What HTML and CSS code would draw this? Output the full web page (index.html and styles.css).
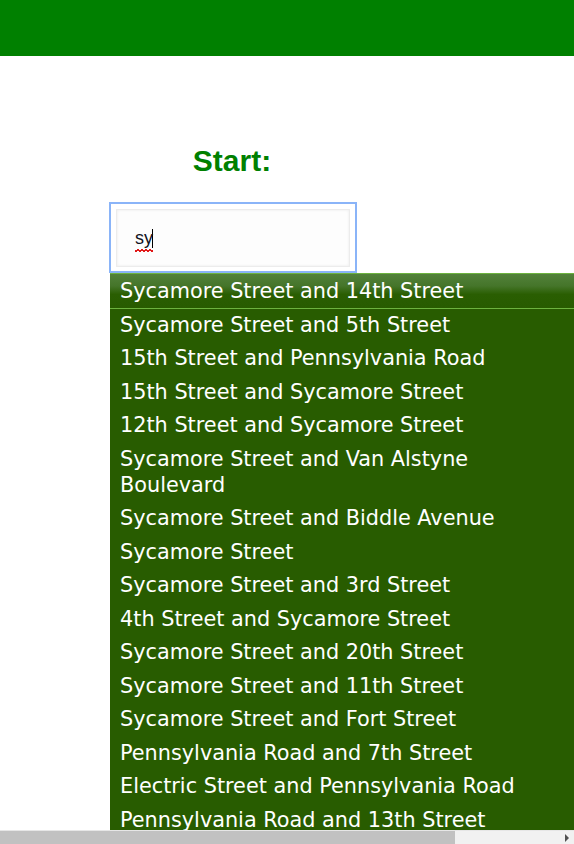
FILE: index.html
```html
<!DOCTYPE html>
<html lang="en">
<head>
<meta charset="utf-8">
<title>Start</title>
<link rel="stylesheet" href="styles.css">
</head>
<body>
<header class="topbar"></header>
<main class="form">
  <h2 class="label">Start:</h2>
  <div class="field-focus">
    <div class="field" role="textbox" aria-label="Start"><span class="typed">sy</span><span class="caret"></span></div>
  </div>
  <ul class="suggestions">
    <li class="item active">Sycamore Street and 14th Street</li>
    <li class="item">Sycamore Street and 5th Street</li>
    <li class="item">15th Street and Pennsylvania Road</li>
    <li class="item">15th Street and Sycamore Street</li>
    <li class="item">12th Street and Sycamore Street</li>
    <li class="item">Sycamore Street and Van Alstyne Boulevard</li>
    <li class="item">Sycamore Street and Biddle Avenue</li>
    <li class="item">Sycamore Street</li>
    <li class="item">Sycamore Street and 3rd Street</li>
    <li class="item">4th Street and Sycamore Street</li>
    <li class="item">Sycamore Street and 20th Street</li>
    <li class="item">Sycamore Street and 11th Street</li>
    <li class="item">Sycamore Street and Fort Street</li>
    <li class="item">Pennsylvania Road and 7th Street</li>
    <li class="item">Electric Street and Pennsylvania Road</li>
    <li class="item">Pennsylvania Road and 13th Street</li>
  </ul>
</main>
<div class="hscroll" aria-hidden="true"><div class="thumb"></div><div class="arrow"></div></div>
</body>
</html>
```

FILE: styles.css
```css
html, body {
  margin: 0;
  padding: 0;
  overflow: hidden;
  background: #ffffff;
}

body {
  font-family: "DejaVu Sans", Verdana, sans-serif;
}

.topbar {
  height: 56px;
  background: #008000;
}

.form {
  padding-left: 109px;
}

.label {
  width: 246px;
  margin: 88px 0 24px;
  text-align: center;
  font-family: "Liberation Sans", Arial, sans-serif;
  font-weight: bold;
  font-size: 30px;
  color: #008000;
}

.field-focus {
  box-sizing: border-box;
  width: 248px;
  height: 71px;
  border: 2px solid #8ab4f8;
  padding: 5px 5px 4px 5px;
}

.field {
  height: 58px;
  box-sizing: border-box;
  border: 1px solid #ececec;
  box-shadow: inset 0 0 3px rgba(0, 0, 0, 0.08);
  background: #fdfdfd;
  padding-left: 18px;
  display: flex;
  align-items: center;
  font-family: "Liberation Sans", Arial, sans-serif;
  font-size: 18px;
  color: #111122;
}

.typed {
  position: relative;
}

.typed::after {
  content: "";
  position: absolute;
  left: 0;
  right: 0;
  bottom: -3px;
  height: 3px;
  background:
    linear-gradient(135deg, transparent 35%, #e01818 35%, #e01818 65%, transparent 65%) 0 0 / 4px 3px repeat-x,
    linear-gradient(45deg, transparent 35%, #e01818 35%, #e01818 65%, transparent 65%) 2px 0 / 4px 3px repeat-x;
}

.caret {
  display: inline-block;
  width: 1px;
  height: 19px;
  background: #000;
  margin-left: -1px;
}

.suggestions {
  list-style: none;
  margin: 0 0 0 1px;
  padding: 0 24px 20px 0;
  width: 464px;
  box-sizing: border-box;
  background: #285c00;
}

.item {
  font-size: 20.8px;
  line-height: 26px;
  padding: 3.75px 0 3.75px 10px;
  color: #ffffff;
}

.item.active {
  margin-right: -24px;
  padding-right: 24px;
  padding-bottom: 4.25px;
  border-top: 1px solid #6db33f;
  border-bottom: 1px solid #6db33f;
  margin-bottom: -1px;
  background: linear-gradient(#52813a 0%, #45752a 35%, #2a5e02 60%, #285c00 100%);
}

.hscroll {
  position: fixed;
  left: 0;
  right: 0;
  bottom: 0;
  height: 13px;
  background: #f1f1f1;
  border-top: 1px solid #e6e6e6;
}

.thumb {
  width: 455px;
  height: 13px;
  background: #c1c1c1;
}

.arrow {
  position: absolute;
  right: 5px;
  top: 3px;
  width: 0;
  height: 0;
  border-top: 4px solid transparent;
  border-bottom: 4px solid transparent;
  border-left: 4px solid #505050;
}
```
